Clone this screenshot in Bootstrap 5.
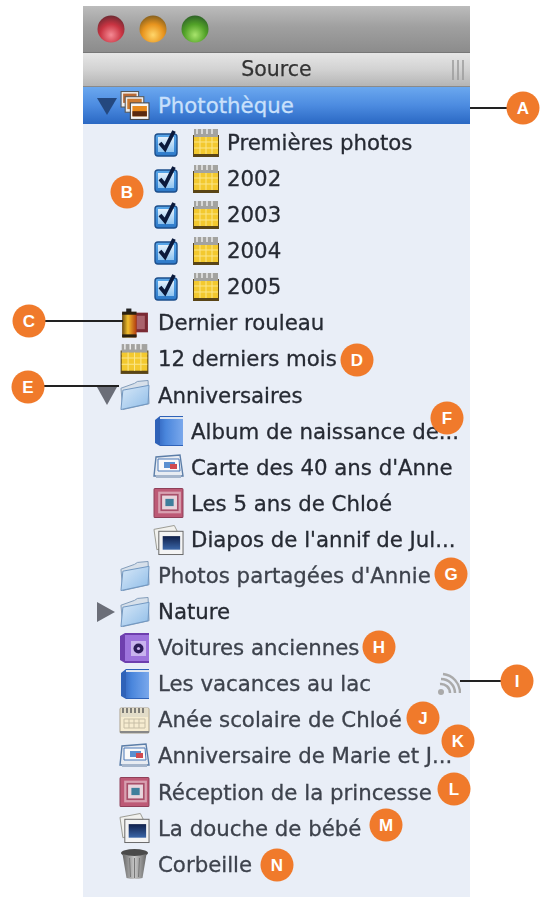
<!DOCTYPE html>
<html lang="fr"><head><meta charset="utf-8"><title>Source</title>
<link href="https://cdn.jsdelivr.net/npm/bootstrap@5.3.0/dist/css/bootstrap.min.css" rel="stylesheet">
<style>
body{background:#fff;margin:0;font-family:"DejaVu Sans",sans-serif}
.stage{width:548px;height:904px;overflow:hidden}
.panel{margin:6px 0 0 83px;width:387px;height:891px;background:#e9eef7}
.tbar{height:47px;padding-left:14px;gap:14px;background:linear-gradient(#bcbcbc,#a0a0a0 45%,#8c8c8c);border-bottom:1px solid #777}
.shead{height:34px;background:linear-gradient(#e6e6e6,#d2d2d2 50%,#b5b5b5);border-bottom:1px solid #8a8a8a;color:#333;font-size:20.500px;filter:blur(.4px);-webkit-text-stroke:.25px #333}
.grip{right:4px;top:7px}
.tree{color:#262a33;font-size:21.300px;line-height:1;filter:blur(.5px);-webkit-text-stroke:.3px currentColor}
.item{height:36.100px;white-space:nowrap}
.item.sel{height:37px;background:linear-gradient(#6ba8ef,#4c8be0 50%,#2a68c3);color:#c9e0fb;margin-bottom:.5px}
.soft{color:#3d424c}
.lv1{padding-left:14px}
.lv2{padding-left:71px}
.lv3{padding-left:70px}
.slot{width:22px;flex:none;display:flex;justify-content:flex-start}
.ico{flex:none;width:31px;height:32px;margin-right:8px}
.lv3 .ico{margin-right:7px}
.chk{flex:none;width:24px;height:28px;margin-right:14px}
.cal{flex:none;width:28px;height:30px;margin-right:7px}
.sig{right:9px;top:6px}
.dot{width:33px;height:33px;background:#f07a2b;color:#fff;font:700 17px/33px "Liberation Sans",sans-serif;text-align:center;transform:translate(-50%,-50%);z-index:3}
.ln{height:2px;background:#222;z-index:2}
.a{left:523px;top:108px}.b{left:127px;top:192px}.c{left:29px;top:321px}.d{left:357px;top:360px}.e{left:28px;top:387px}.f{left:447px;top:418px}.g{left:451px;top:574px}.h{left:379px;top:647px}.i{left:517px;top:681px}.j{left:423px;top:718px}.k{left:458px;top:741px}.l{left:454px;top:789px}.m{left:386px;top:825px}.n{left:277px;top:865px}
.la{left:470px;width:40px;top:107px}.lc{left:45px;width:78px;top:320px}.le{left:44px;width:75px;top:385px}.li{left:460px;width:42px;top:680px}
</style></head>
<body>
<svg width="0" height="0" class="position-absolute">
<defs>
<radialGradient id="gr" cy=".72" r=".72"><stop offset="0" stop-color="#f58a94"/><stop offset=".55" stop-color="#c93442"/><stop offset="1" stop-color="#6e2a32"/></radialGradient>
<radialGradient id="go" cy=".72" r=".72"><stop offset="0" stop-color="#ffd66a"/><stop offset=".55" stop-color="#e8941e"/><stop offset="1" stop-color="#86601e"/></radialGradient>
<radialGradient id="gg" cy=".72" r=".72"><stop offset="0" stop-color="#a8e46c"/><stop offset=".55" stop-color="#52a228"/><stop offset="1" stop-color="#2e6228"/></radialGradient>
<linearGradient id="gf" x1="0" y1="0" x2="1" y2="1"><stop offset="0" stop-color="#d8e8f8"/><stop offset="1" stop-color="#8fbde8"/></linearGradient>
<linearGradient id="gb" x1="0" y1="0" x2="1" y2="0"><stop offset="0" stop-color="#3a70c8"/><stop offset=".25" stop-color="#4a86dc"/><stop offset="1" stop-color="#7aa8ec"/></linearGradient>
<linearGradient id="gc" x1="0" y1="0" x2="0" y2="1"><stop offset="0" stop-color="#5aa8ea"/><stop offset="1" stop-color="#2c78c8"/></linearGradient>
<linearGradient id="gci" x1="0" y1="0" x2="0" y2="1"><stop offset="0" stop-color="#e4f0fb"/><stop offset="1" stop-color="#8ec4f0"/></linearGradient>
<linearGradient id="gfilm" x1="0" y1="0" x2="1" y2="0"><stop offset="0" stop-color="#6b4a10"/><stop offset=".4" stop-color="#f2c02e"/><stop offset="1" stop-color="#b03a10"/></linearGradient>
<linearGradient id="gt" x1="0" y1="0" x2="1" y2="0"><stop offset="0" stop-color="#666"/><stop offset=".5" stop-color="#c8c8c8"/><stop offset="1" stop-color="#666"/></linearGradient>
<linearGradient id="gp" x1="0" y1="0" x2="0" y2="1"><stop offset="0" stop-color="#10204a"/><stop offset="1" stop-color="#3a66a8"/></linearGradient>
<symbol id="s-chk" viewBox="0 0 24 28"><rect x="1" y="5" width="22" height="22" rx="3" fill="url(#gc)" stroke="#1d4f8c" stroke-width="1.400"/><rect x="4" y="8" width="16" height="15" fill="url(#gci)"/><path d="M6 14l5 6 L20 2" fill="none" stroke="#0b1a3c" stroke-width="3.800"/></symbol>
<symbol id="s-cal" viewBox="0 0 28 30"><rect x="1" y="7" width="26" height="22" fill="#5a4516"/><rect x="2" y="1" width="24" height="10" fill="#a3a3a0"/><path d="M5 1v5M10 1v5M15 1v5M20 1v5" stroke="#eee" stroke-width="1.400"/><rect x="2" y="9" width="24" height="17" fill="#f3c92f"/><path d="M2 14h24M2 20h24M8 9v17M14 9v17M20 9v17" stroke="#fbe68a" stroke-width="1"/></symbol>
<symbol id="s-lib" viewBox="0 0 30 30"><rect x="2" y="1" width="17" height="15" fill="#eee" stroke="#555"/><rect x="4" y="3" width="13" height="9" fill="#b86a36"/><rect x="6" y="6" width="18" height="15" fill="#eee" stroke="#555"/><rect x="8" y="8" width="14" height="10" fill="#cd7a30"/><rect x="11" y="12" width="18" height="16" fill="#f6f6f6" stroke="#444"/><rect x="13" y="15" width="14" height="10" fill="#e88a1c"/><rect x="13" y="20" width="14" height="5" fill="#5a2a10"/></symbol>
<symbol id="s-film" viewBox="0 0 30 30"><rect x="14" y="5" width="14" height="19" fill="#7a2a34"/><path d="M17 8h8v13h-8z" fill="#a9636c"/><rect x="3" y="5" width="14" height="24" rx="1" fill="url(#gfilm)"/><rect x="7" y="1" width="5" height="4" fill="#222"/><rect x="3" y="4" width="14" height="3" fill="#2a2010"/><rect x="3" y="26" width="14" height="3" fill="#2a2010"/></symbol>
<symbol id="s-fold" viewBox="0 0 32 32"><path d="M2 9l14-5 3-2 11-1 1 24-27 6z" fill="#d7e0ea" stroke="#7f9ab8"/><path d="M2 31L4 11l27-5-1 19z" fill="url(#gf)" stroke="#6f96c0"/></symbol>
<symbol id="s-album" viewBox="0 0 31 32"><path d="M2 5L7 1h23v30H7l-5-3z" fill="#2f62b8"/><rect x="7" y="2" width="23" height="2" fill="#dfe6f0"/><rect x="7" y="4" width="23" height="26" fill="url(#gb)"/></symbol>
<symbol id="s-card" viewBox="0 0 31 26"><path d="M1 22L3 3l24-2 3 21z" fill="#e8ecf2" stroke="#5c7ea8" stroke-width="1.400"/><path d="M5 5h21l1 12H5z" fill="#fafafa" stroke="#4a78b8"/><rect x="11" y="8" width="11" height="6" fill="#5b90d0"/><rect x="17" y="10" width="7" height="5" fill="#d04a50"/><rect x="3" y="21" width="25" height="3" fill="#a6b6cc"/></symbol>
<symbol id="s-cal2" viewBox="0 0 31 28"><rect x="1" y="2" width="29" height="25" rx="1" fill="#f6ecd0" stroke="#aaa08a"/><rect x="2" y="2" width="27" height="9" fill="#e2dcc8"/><path d="M4 2v5M8 2v5M12 2v5M16 2v5M20 2v5M24 2v5" stroke="#555" stroke-width="1.400"/><path d="M5 13h21v9H5z M5 17h21 M10 13v9M15 13v9M20 13v9" fill="none" stroke="#c7bea6"/><rect x="1" y="25" width="29" height="2" fill="#888"/></symbol>
<symbol id="s-book" viewBox="0 0 30 30"><rect x="1" y="1" width="28" height="28" rx="1" fill="#bd5a76" stroke="#8f3f58"/><rect x="5" y="4" width="22" height="21" fill="#d8a0b0"/><rect x="8" y="7" width="16" height="15" fill="#e8d4dc" stroke="#a8506a" stroke-width="1.600"/><rect x="12" y="11" width="8" height="7" fill="#3f7f9c"/></symbol>
<symbol id="s-slide" viewBox="0 0 32 32"><path d="M1 5L22 1l3 6-18 3 1 15-4 1z" fill="#f1f1ee" stroke="#9a9a92"/><rect x="6" y="7" width="25" height="24" fill="#f4f4f4" stroke="#666"/><rect x="10" y="12" width="18" height="14" fill="url(#gp)"/></symbol>
<symbol id="s-purple" viewBox="0 0 31 32"><path d="M1 4L6 1h24v30H6l-5-3z" fill="#6e3fae"/><rect x="6" y="3" width="24" height="26" fill="#9d73dc"/><rect x="12" y="9" width="15" height="15" fill="#c9b4ee"/><circle cx="19.500" cy="16.500" r="5" fill="#2c1c58"/><circle cx="19.500" cy="16.500" r="1.600" fill="#c9b4ee"/></symbol>
<symbol id="s-trash" viewBox="0 0 30 32"><ellipse cx="15" cy="5" rx="13.500" ry="4" fill="#4a4a4a"/><path d="M3 6l4 24q8 2 16 0l4-24q-12 4-24 0z" fill="url(#gt)"/><path d="M10 10l1 19M15 10v20M20 10l-1 19" stroke="#777"/></symbol>
</defs>
</svg>
<div class="stage position-relative">
<div class="panel d-flex flex-column">
<div class="tbar d-flex align-items-center">
<svg width="28" height="28"><circle cx="14" cy="14" r="13.500" fill="url(#gr)"/></svg>
<svg width="28" height="28"><circle cx="14" cy="14" r="13.500" fill="url(#go)"/></svg>
<svg width="28" height="28"><circle cx="14" cy="14" r="13.500" fill="url(#gg)"/></svg>
</div>
<div class="shead d-flex align-items-center justify-content-center position-relative">Source
<svg class="grip position-absolute" width="14" height="20"><path d="M1 0v20M6 0v20M11 0v20" stroke="#9a9a9a" stroke-width="1.500"/></svg></div>
<div class="tree">
<div class="item sel lv1 d-flex align-items-center"><span class="slot"><svg width="20" height="18"><path d="M0 1h20L10 18z" fill="#24487f"/></svg></span><svg class="ico"><use href="#s-lib"/></svg><span>Photothèque</span></div>
<div class="item lv2 d-flex align-items-center"><svg class="chk"><use href="#s-chk"/></svg><svg class="cal"><use href="#s-cal"/></svg><span>Premières photos</span></div>
<div class="item lv2 d-flex align-items-center"><svg class="chk"><use href="#s-chk"/></svg><svg class="cal"><use href="#s-cal"/></svg><span>2002</span></div>
<div class="item lv2 d-flex align-items-center"><svg class="chk"><use href="#s-chk"/></svg><svg class="cal"><use href="#s-cal"/></svg><span>2003</span></div>
<div class="item lv2 d-flex align-items-center"><svg class="chk"><use href="#s-chk"/></svg><svg class="cal"><use href="#s-cal"/></svg><span>2004</span></div>
<div class="item lv2 d-flex align-items-center"><svg class="chk"><use href="#s-chk"/></svg><svg class="cal"><use href="#s-cal"/></svg><span>2005</span></div>
<div class="item lv1 d-flex align-items-center"><span class="slot"></span><svg class="ico"><use href="#s-film"/></svg><span>Dernier rouleau</span></div>
<div class="item lv1 d-flex align-items-center"><span class="slot"></span><svg class="ico"><use href="#s-cal"/></svg><span>12 derniers mois</span></div>
<div class="item lv1 d-flex align-items-center"><span class="slot"><svg width="20" height="19"><path d="M0 1h20L10 19z" fill="#6b6e78"/></svg></span><svg class="ico"><use href="#s-fold"/></svg><span>Anniversaires</span></div>
<div class="item lv3 d-flex align-items-center"><svg class="ico"><use href="#s-album"/></svg><span>Album de naissance de...</span></div>
<div class="item lv3 d-flex align-items-center"><svg class="ico"><use href="#s-card"/></svg><span>Carte des 40 ans d'Anne</span></div>
<div class="item lv3 d-flex align-items-center"><svg class="ico"><use href="#s-book"/></svg><span>Les 5 ans de Chloé</span></div>
<div class="item lv3 d-flex align-items-center"><svg class="ico"><use href="#s-slide"/></svg><span>Diapos de l'annif de Jul...</span></div>
<div class="item lv1 soft d-flex align-items-center"><span class="slot"></span><svg class="ico"><use href="#s-fold"/></svg><span>Photos partagées d'Annie</span></div>
<div class="item lv1 d-flex align-items-center"><span class="slot"><svg width="18" height="20"><path d="M0 0l18 10L0 20z" fill="#6b6e78"/></svg></span><svg class="ico"><use href="#s-fold"/></svg><span>Nature</span></div>
<div class="item lv1 soft d-flex align-items-center"><span class="slot"></span><svg class="ico"><use href="#s-purple"/></svg><span>Voitures anciennes</span></div>
<div class="item lv1 soft d-flex align-items-center position-relative"><span class="slot"></span><svg class="ico"><use href="#s-album"/></svg><span>Les vacances au lac</span><svg class="sig position-absolute" width="24" height="24"><circle cx="4" cy="20" r="3" fill="#aaa"/><path d="M3 12a9 9 0 0 1 10 9M4 7a14 14 0 0 1 14 14M6 2a19 19 0 0 1 17 19" fill="none" stroke="#aaa" stroke-width="2.500"/></svg></div>
<div class="item lv1 soft d-flex align-items-center"><span class="slot"></span><svg class="ico"><use href="#s-cal2"/></svg><span>Anée scolaire de Chloé</span></div>
<div class="item lv1 soft d-flex align-items-center"><span class="slot"></span><svg class="ico"><use href="#s-card"/></svg><span>Anniversaire de Marie et J...</span></div>
<div class="item lv1 soft d-flex align-items-center"><span class="slot"></span><svg class="ico"><use href="#s-book"/></svg><span>Réception de la princesse</span></div>
<div class="item lv1 soft d-flex align-items-center"><span class="slot"></span><svg class="ico"><use href="#s-slide"/></svg><span>La douche de bébé</span></div>
<div class="item lv1 soft d-flex align-items-center"><span class="slot"></span><svg class="ico"><use href="#s-trash"/></svg><span>Corbeille</span></div>
</div>
</div>
<span class="ln la position-absolute"></span><span class="ln lc position-absolute"></span><span class="ln le position-absolute"></span><span class="ln li position-absolute"></span>
<span class="dot a position-absolute rounded-circle">A</span><span class="dot b position-absolute rounded-circle">B</span><span class="dot c position-absolute rounded-circle">C</span><span class="dot d position-absolute rounded-circle">D</span><span class="dot e position-absolute rounded-circle">E</span><span class="dot f position-absolute rounded-circle">F</span><span class="dot g position-absolute rounded-circle">G</span><span class="dot h position-absolute rounded-circle">H</span><span class="dot i position-absolute rounded-circle">I</span><span class="dot j position-absolute rounded-circle">J</span><span class="dot k position-absolute rounded-circle">K</span><span class="dot l position-absolute rounded-circle">L</span><span class="dot m position-absolute rounded-circle">M</span><span class="dot n position-absolute rounded-circle">N</span>
</div>
<script src="https://cdn.jsdelivr.net/npm/bootstrap@5.3.0/dist/js/bootstrap.bundle.min.js"></script>
</body></html>
